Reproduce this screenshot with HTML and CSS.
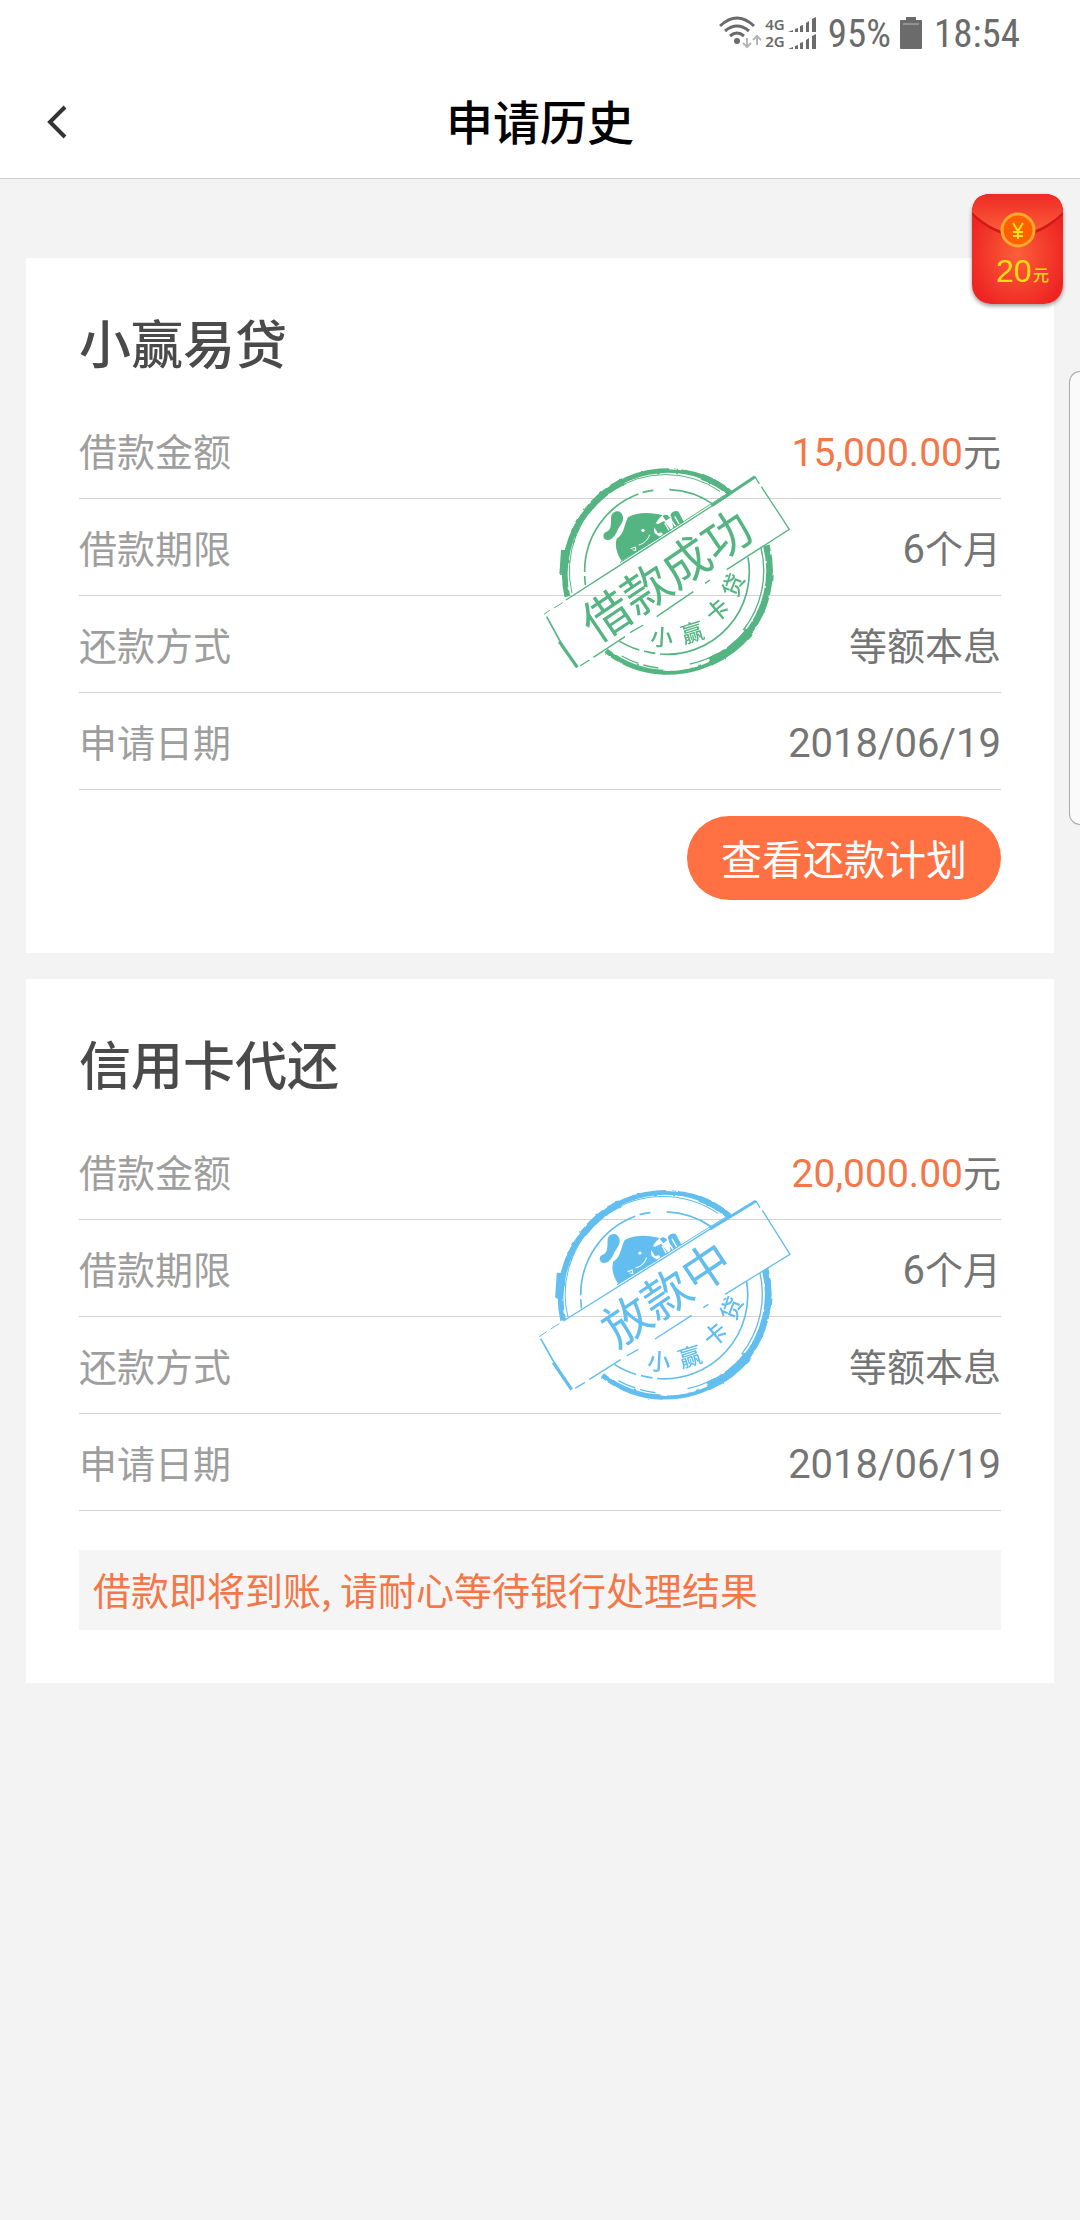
FILE: index.html
```html
<!doctype html>
<html lang="zh-CN">
<head>
  <meta charset="UTF-8">
  <meta name="viewport" content="width=device-width, initial-scale=1.0">
  <title>申请历史</title>
  <link rel="stylesheet" href="styles.css">
</head>
<body>
  <!-- shared shapes of the stamps -->
  <svg class="defs" width="0" height="0" aria-hidden="true">
    <defs>
      <filter id="rough" x="-5%" y="-5%" width="110%" height="110%">
        <feTurbulence type="fractalNoise" baseFrequency="0.04" numOctaves="2" seed="4" result="noise"/>
        <feDisplacementMap in="SourceGraphic" in2="noise" scale="7" xChannelSelector="R" yChannelSelector="G"/>
      </filter>
      <mask id="banner-long" maskUnits="userSpaceOnUse" x="0" y="0" width="840" height="720">
        <rect width="840" height="720" fill="#fff"/>
        <path d="M42 493 675 78 778 238 145 655Z" fill="#000"/>
      </mask>
      <mask id="banner-short" maskUnits="userSpaceOnUse" x="0" y="0" width="840" height="720">
        <rect width="840" height="720" fill="#fff"/>
        <path d="M28 497 678 88 780 250 127 660Z" fill="#000"/>
      </mask>
      <g id="seal">
        <g fill="none" stroke="currentColor">
          <g filter="url(#rough)">
            <path d="M112 440A303 303 0 0 1 180 172" stroke-width="17"/>
            <path d="M170 185A303 303 0 0 1 280 94" stroke-width="21"/>
            <path d="M262 102A303 303 0 0 1 520 81" stroke-width="14"/>
            <path d="M515 80A303 303 0 0 1 604 132" stroke-width="18"/>
            <path d="M709 286A303 303 0 0 1 645 560" stroke-width="20"/>
            <path d="M658 545A303 303 0 0 1 540 635" stroke-width="26"/>
            <path d="M575 622A303 303 0 0 1 400 668" stroke-width="12"/>
            <path d="M405 667A303 303 0 0 1 228 602" stroke-width="15"/>
            <path d="M103 300 98 375" stroke-width="20"/>
          </g>
          <path d="M126 430A289 289 0 0 1 570 124" stroke-width="3"/>
          <path d="M692 290A289 289 0 0 1 640 540M560 612A289 289 0 0 1 480 642M385 654A289 289 0 0 1 340 645M325 640A289 289 0 0 1 275 618" stroke-width="4"/>
          <path d="M166 405 164 378M164 366A247 247 0 0 1 325 132M338 127A247 247 0 0 1 370 121M418 119A247 247 0 0 1 550 163M654 322A247 247 0 0 1 390 612M376 610A247 247 0 0 1 342 603M328 600A247 247 0 0 1 260 568" stroke-width="5"/>
        </g>
        <!-- mascot -->
        <g fill="currentColor">
          <path d="M250 188C262 180 276 184 279 202C281 218 268 228 262 242C256 256 246 271 231 270C217 268 217 250 228 246C242 241 242 229 243 216C244 204 241 195 250 188Z"/>
          <path d="M275 333C260 310 254 288 260 266C284 252 281 226 294 202C325 184 368 188 398 196C378 212 368 234 374 250L392 262Z"/>
          <path d="M380 224 402 213 424 241 400 254ZM408 212 398 199C406 190 414 195 420 203ZM424 201C414 191 438 176 446 186L462 216 430 236Z"/>
          <path d="M384 250 372 231C368 222 380 216 386 225L398 246Z"/>
        </g>
        <g fill="none" stroke="#fff">
          <circle cx="339" cy="241" r="5" fill="#fff" stroke="none"/>
          <path d="M359 254C354 270 340 282 326 285M302 296 316 291 318 301 308 300" stroke-width="3"/>
          <path d="M420 206 438 231M434 199 448 223M404 219 417 241" stroke-width="4"/>
        </g>
        <g class="stamp--ring-text" fill="currentColor">
          <text transform="translate(395 562) rotate(3)" y="25">小</text>
          <text transform="translate(487 548) rotate(-17)" y="25">赢</text>
          <text transform="translate(562 482) rotate(-40)" y="25">卡</text>
          <text transform="translate(610 405) rotate(-68)" y="25">贷</text>
        </g>
      </g>
    </defs>
  </svg>

  <header class="header">
    <div class="status-bar">
      <svg width="44" height="34" viewBox="0 0 44 34">
        <g fill="none" stroke="#6b6b6b" stroke-width="3">
          <path d="M1 10Q18-6 35 10M6 15Q18 5 30 15M11 20Q18 14 25 20"/>
        </g>
        <circle cx="18" cy="25" r="3" fill="#6b6b6b"/>
        <path d="M28 22v9M24 27l4 4 4-4M38 29v-9M34 24l4-4 4 4" fill="none" stroke="#b5b5b5" stroke-width="2"/>
      </svg>
      <div class="network">
        <span>4G</span>
        <span>2G</span>
      </div>
      <svg width="28" height="32" viewBox="0 0 28 32" fill="#6b6b6b">
        <path id="bars" d="M0 15 5 13V15ZM7 12 10 11V15H7ZM12 9 15 8V15H12ZM18 6 21 4V15H18ZM24 2 28 0V15H24Z"/>
        <use href="#bars" y="17"/>
      </svg>
      <span class="status-text">95%</span>
      <svg width="22" height="32" viewBox="0 0 22 32" fill="#6b6b6b">
        <path d="M6 0h10v3h5q1 0 1 1v27q0 1-1 1H1q-1 0-1-1V4q0-1 1-1h5Z"/>
        <path d="M3 7h16" stroke="#bbb"/>
      </svg>
      <span class="status-text">18:54</span>
    </div>
    <nav class="nav">
      <button type="button" class="back" aria-label="返回">
        <svg width="22" height="34" viewBox="0 0 22 34">
          <path d="M19 2 4 17 19 32" fill="none" stroke="#333" stroke-width="4"/>
        </svg>
      </button>
      <h1>申请历史</h1>
    </nav>
  </header>

  <main>
    <section class="card">
      <h2>小赢易贷</h2>
      <dl>
        <div class="row">
          <dt>借款金额</dt>
          <dd><span class="amount">15,000.00</span>元</dd>
        </div>
        <div class="row">
          <dt>借款期限</dt>
          <dd><span class="num">6</span>个月</dd>
        </div>
        <div class="row">
          <dt>还款方式</dt>
          <dd>等额本息</dd>
        </div>
        <div class="row">
          <dt>申请日期</dt>
          <dd><span class="num">2018/06/19</span></dd>
        </div>
      </dl>
      <div class="card--controls">
        <button type="button" class="plan">查看还款计划</button>
      </div>
      <svg class="stamp stamp__success" viewBox="0 0 840 720">
        <g mask="url(#banner-long)">
          <use href="#seal"/>
        </g>
        <g fill="none" stroke="currentColor">
          <path d="M108 450 260 352M260 352 600 133" stroke-width="4"/>
          <path d="M270 338 600 125" stroke-width="3"/>
          <path d="M545 167 675 80" stroke-width="9"/>
          <path d="M675 80 688 102M694 110 778 238 590 359M540 390 525 400M490 425 380 500M340 525 300 548M285 560 190 622M178 630 150 648" stroke-width="4"/>
          <path d="M98 458 72 474M60 480 42 493" stroke-width="3"/>
          <path d="M50 500 98 588" stroke-width="5"/>
          <path d="M88 575 142 652" stroke-width="10"/>
        </g>
        <text class="stamp--text" transform="translate(410 377) rotate(-34)" y="52" fill="currentColor">借款成功</text>
      </svg>
    </section>

    <section class="card">
      <h2>信用卡代还</h2>
      <dl>
        <div class="row">
          <dt>借款金额</dt>
          <dd><span class="amount">20,000.00</span>元</dd>
        </div>
        <div class="row">
          <dt>借款期限</dt>
          <dd><span class="num">6</span>个月</dd>
        </div>
        <div class="row">
          <dt>还款方式</dt>
          <dd>等额本息</dd>
        </div>
        <div class="row">
          <dt>申请日期</dt>
          <dd><span class="num">2018/06/19</span></dd>
        </div>
      </dl>
      <p class="notice">借款即将到账, 请耐心等待银行处理结果</p>
      <svg class="stamp stamp__pending" viewBox="0 0 840 720">
        <g mask="url(#banner-short)">
          <use href="#seal" transform="translate(-14 2) scale(1.014)"/>
        </g>
        <g fill="none" stroke="currentColor">
          <path d="M100 450 600 137" stroke-width="4"/>
          <path d="M260 342 600 130" stroke-width="3"/>
          <path d="M540 174 678 90" stroke-width="9"/>
          <path d="M678 90 690 110M697 118 780 250 585 370M535 400 520 410M485 433 375 504M325 535 290 555M272 566 178 625M165 634 135 652" stroke-width="4"/>
          <path d="M88 458 62 474M50 482 28 497" stroke-width="3"/>
          <path d="M32 503 80 588" stroke-width="5"/>
          <path d="M70 575 125 656" stroke-width="10"/>
        </g>
        <text class="stamp--text" transform="translate(410 370) rotate(-34)" y="52" fill="currentColor">放款中</text>
      </svg>
    </section>
  </main>

  <button type="button" class="red-packet" aria-label="红包20元">
    <svg width="91" height="110" viewBox="0 0 91 110">
      <defs>
        <radialGradient id="packet" cx=".5" cy=".55" r=".55">
          <stop offset="0" stop-color="#fb6038"/>
          <stop offset="1" stop-color="#ee2423"/>
        </radialGradient>
        <linearGradient id="flap" x2="0" y2="1">
          <stop offset="0" stop-color="#ee2a24"/>
          <stop offset="1" stop-color="#fc5f3b"/>
        </linearGradient>
      </defs>
      <rect width="91" height="110" rx="19" fill="url(#packet)"/>
      <path d="M0 21Q45 64 91 21V19Q91 0 72 0H19Q0 0 0 19Z" fill="#cf1a1a"/>
      <path d="M0 18Q45 61 91 18Q90 0 72 0H19Q1 0 0 18Z" fill="url(#flap)"/>
      <circle cx="46" cy="36" r="16" fill="#ff6000" stroke="#ffa82e" stroke-width="3"/>
      <path d="M41 29 46 37 51 29M46 37V45M41 38H51M41 42H51" fill="none" stroke="#ffe11a" stroke-width="2"/>
      <text class="packet--num" x="24" y="88">20</text>
      <text class="packet--unit" x="61" y="87">元</text>
    </svg>
  </button>
  <div class="edge-handle"></div>
</body>
</html>
```
FILE: styles.css
```css
* {
  box-sizing: border-box;
}

body {
  position: relative;
  min-height: 100vh;
  margin: 0;
  background-color: #f3f3f3;
  font-family: Roboto, "Noto Sans CJK SC", sans-serif;
  font-size: 38px;
  color: #757575;
  overflow-x: hidden;
}

h1, h2, dl, dd, p {
  margin: 0;
}

button {
  border: none;
  padding: 0;
  background: none;
  font-family: inherit;
  cursor: pointer;
}

.defs {
  position: absolute;
}

.header {
  background-color: #fff;
  border-bottom: solid #d0d0d0 1px;
}

.status-bar {
  display: flex;
  justify-content: flex-end;
  align-items: center;
  height: 66px;
  padding-right: 60px;
  color: #6b6b6b;
}

.network {
  display: flex;
  flex-direction: column;
  margin: 0 3px 0 2px;
  font-family: "Noto Sans", sans-serif;
  font-size: 15px;
  font-weight: 600;
  line-height: 17px;
}

.status-text {
  padding-top: 2px;
  margin: 0 9px 0 12px;
  font-family: "Roboto Condensed", "Liberation Sans Narrow", Roboto, sans-serif;
  font-size: 39px;
  line-height: 64px;
}

.status-text:last-child {
  margin-right: 0;
}

.nav {
  display: grid;
  grid-template-columns: 112px 1fr 112px;
  align-items: center;
  height: 112px;
}

.back {
  display: flex;
  align-items: center;
  height: 112px;
  padding-left: 46px;
}

.nav > h1 {
  padding-top: 3px;
  text-align: center;
  font-size: 47px;
  font-weight: 500;
  line-height: 66px;
  color: #000;
}

main {
  display: flex;
  flex-direction: column;
  gap: 26px;
  padding: 79px 26px 26px;
}

.card {
  position: relative;
  padding: 53px;
  background-color: #fff;
}

.card > h2 {
  margin-bottom: 19px;
  font-size: 52px;
  font-weight: 500;
  line-height: 72px;
  color: #4a4a4a;
}

.row {
  display: flex;
  justify-content: space-between;
  height: 97px;
  padding-top: 5px;
  border-bottom: solid #d3d3d3 1px;
  line-height: 92px;
}

.row > dt {
  color: #9e9e9e;
}

.num {
  font-size: 40px;
}

.amount {
  font-size: 39px;
  color: #f37748;
}

.card--controls {
  display: flex;
  justify-content: flex-end;
  padding-top: 26px;
}

.plan {
  height: 84px;
  padding: 0 34px 2px;
  border-radius: 42px;
  background-color: #ff7143;
  font-size: 41px;
  color: #fff;
}

.notice {
  margin-top: 39px;
  padding: 0 14px 3px;
  background-color: #f5f5f5;
  font-family: "Noto Sans CJK SC", sans-serif;
  line-height: 77px;
  color: #f37748;
}

.stamp {
  position: absolute;
  top: 192px;
  right: 244px;
  width: 280px;
  height: 240px;
  pointer-events: none;
}

.stamp__success {
  color: #55b582;
}

.stamp__pending {
  color: #62beee;
}

.stamp--text {
  font-size: 144px;
  text-anchor: middle;
}

.stamp--ring-text {
  font-size: 68px;
  font-weight: 500;
  text-anchor: middle;
}

.red-packet {
  position: absolute;
  top: 194px;
  right: 17px;
  height: 110px;
  border-radius: 19px;
  box-shadow: 0 2px 4px rgba(0, 0, 0, .4);
}

.red-packet > svg {
  display: block;
}

.packet--num {
  font-family: "Liberation Sans", sans-serif;
  font-size: 32px;
  fill: #ffdb15;
}

.packet--unit {
  font-size: 16px;
  font-weight: 500;
  fill: #ffdb15;
}

.edge-handle {
  position: absolute;
  top: 371px;
  right: 0;
  width: 11px;
  height: 454px;
  border: solid #aaa 1px;
  border-right: none;
  border-radius: 12px 0 0 12px;
  background-color: #fafafa;
}
```
